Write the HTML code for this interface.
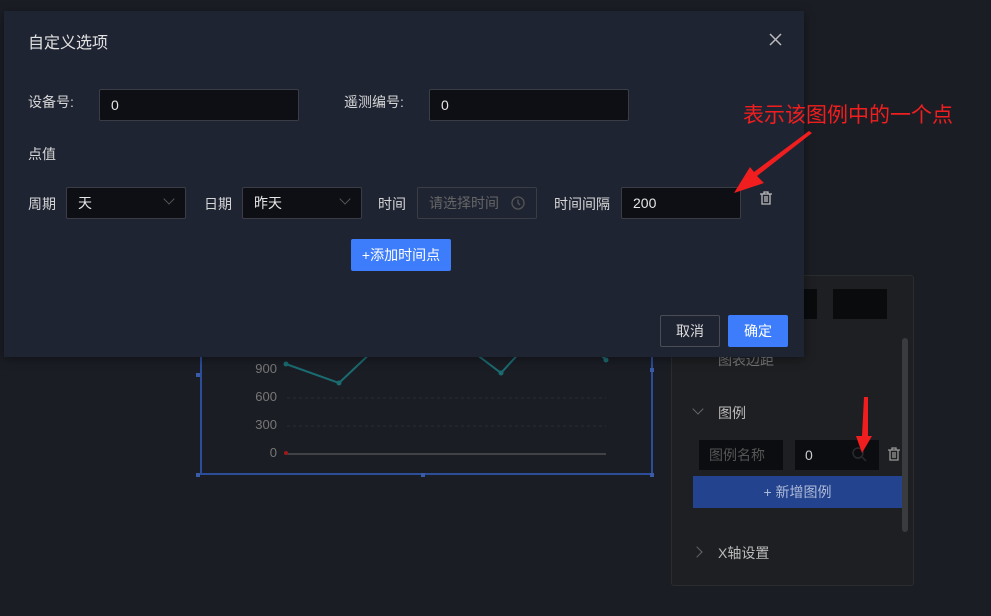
<!DOCTYPE html>
<html><head><meta charset="utf-8"><style>
*{box-sizing:border-box;margin:0;padding:0}
body{width:991px;height:616px;overflow:hidden;background:#1b1d25;font-family:"Liberation Sans","Noto Sans CJK SC",sans-serif;font-size:14px;color:#d8d8d8;position:relative}
.a{position:absolute}
.inp{position:absolute;background:#0e0f14;border:1px solid #3a3d45;border-radius:2px;height:32px;line-height:30px;padding-left:11px;color:#e6e6e6;font-size:14px}
.lbl{position:absolute;font-size:14px;color:#d6d6d6}
.chev{position:absolute;width:8px;height:8px;border-right:1px solid #666;border-bottom:1px solid #666;transform:rotate(45deg)}
</style></head><body>
<div class="a" style="left:671px;top:275px;width:243px;height:311px;background:#1e1f22;border:1px solid #2b2c30;border-radius:3px"></div>
<div class="a" style="left:803px;top:289px;width:14px;height:30px;background:#0a0b0d"></div>
<div class="a" style="left:833px;top:289px;width:54px;height:30px;background:#0a0b0d"></div>
<div class="a" style="left:902px;top:338px;width:6px;height:194px;background:#3a3b3f;border-radius:3px"></div>
<div class="a" style="left:718px;top:350px;font-size:14px;color:#777">图表边距</div>
<div class="chev" style="left:694px;top:405px"></div>
<div class="a" style="left:718px;top:403px;font-size:14px;color:#bbb">图例</div>
<div class="a" style="left:699px;top:440px;width:84px;height:30px;background:#0c0d10;color:#555;line-height:30px;padding-left:10px">图例名称</div>
<div class="a" style="left:795px;top:440px;width:84px;height:30px;background:#0c0d10;color:#ccc;line-height:30px;padding-left:10px">0</div>
<svg class="a" style="left:850px;top:445px" width="18" height="20"><circle cx="8" cy="8" r="5" stroke="#2a2b2e" fill="none" stroke-width="1.5"/><line x1="12" y1="12" x2="16" y2="16" stroke="#2a2b2e" stroke-width="1.5"/></svg>
<svg class="a" style="left:886px;top:446px" width="16" height="16"><path d="M2 4h12M6 4V2h4v2M4 4v10h8V4M7 6v6M9 6v6" stroke="#999" fill="none" stroke-width="1.3"/></svg>
<div class="a" style="left:693px;top:476px;width:209px;height:32px;background:#24438e;color:#aebbd8;text-align:center;line-height:32px">+ 新增图例</div>
<div class="chev" style="left:693px;top:548px;transform:rotate(-45deg)"></div>
<div class="a" style="left:718px;top:543px;color:#bbb">X轴设置</div>
<div class="a" style="left:200px;top:300px;width:453px;height:175px;border:2px solid #2b4d9a;border-top:none"></div>
<svg class="a" style="left:190px;top:340px" width="480" height="145">
<g fill="#3a5ba8"><rect x="6" y="33" width="4" height="4"/><rect x="6" y="133" width="4" height="4"/><rect x="231" y="133" width="4" height="4"/><rect x="460" y="133" width="4" height="4"/><rect x="460" y="28" width="4" height="4"/></g>
<g stroke="#2a2d35" stroke-dasharray="3 3"><line x1="97" y1="58" x2="416" y2="58"/><line x1="97" y1="86" x2="416" y2="86"/></g>
<line x1="97" y1="114" x2="416" y2="114" stroke="#666"/>
<polyline points="96,24 149,43 186,8" stroke="#1a6b70" stroke-width="2" fill="none"/>
<polyline points="278,8 311,33 332,10" stroke="#1a6b70" stroke-width="2" fill="none"/>
<polyline points="410,14 416,20" stroke="#1a6b70" stroke-width="2" fill="none"/>
<g fill="#1a6b70"><circle cx="96" cy="24" r="2.5"/><circle cx="149" cy="43" r="2.5"/><circle cx="311" cy="33" r="2.5"/><circle cx="416" cy="20" r="2.5"/></g>
<circle cx="96" cy="113" r="2" fill="#a01818"/>
<g fill="#777" font-size="13" text-anchor="end" font-family="Liberation Sans"><text x="87" y="33">900</text><text x="87" y="61">600</text><text x="87" y="89">300</text><text x="87" y="117">0</text></g>
</svg>
<div class="a" style="left:4px;top:11px;width:800px;height:346px;background:#1f2433;box-shadow:0 2px 10px rgba(0,0,0,.4)"></div>
<div class="a" style="left:28px;top:29px;font-size:16px;color:#e2e2e2">自定义选项</div>
<svg class="a" style="left:768px;top:32px" width="15" height="15"><path d="M2 2L13 13M13 2L2 13" stroke="#bbb" stroke-width="1.5"/></svg>
<div class="lbl" style="left:28px;top:92px">设备号:</div>
<div class="inp" style="left:99px;top:89px;width:200px">0</div>
<div class="lbl" style="left:344px;top:92px">遥测编号:</div>
<div class="inp" style="left:429px;top:89px;width:200px">0</div>
<div class="lbl" style="left:28px;top:144px">点值</div>
<div class="lbl" style="left:28px;top:194px">周期</div>
<div class="inp" style="left:66px;top:187px;width:120px">天</div>
<div class="chev" style="left:165px;top:195px;border-color:#555"></div>
<div class="lbl" style="left:204px;top:194px">日期</div>
<div class="inp" style="left:242px;top:187px;width:120px">昨天</div>
<div class="chev" style="left:341px;top:195px;border-color:#555"></div>
<div class="lbl" style="left:378px;top:194px">时间</div>
<div class="inp" style="left:417px;top:187px;width:120px;background:#1f2433;color:#666">请选择时间</div>
<svg class="a" style="left:510px;top:195px" width="16" height="16"><circle cx="8" cy="8" r="6" stroke="#555" fill="none" stroke-width="1.3"/><path d="M8 4.5V8l2 2" stroke="#555" fill="none" stroke-width="1.3"/></svg>
<div class="lbl" style="left:554px;top:194px">时间间隔</div>
<div class="inp" style="left:621px;top:187px;width:120px">200</div>
<svg class="a" style="left:758px;top:190px" width="16" height="16"><path d="M2 4h12M6 4V2h4v2M4 4v10h8V4M7 6v6M9 6v6" stroke="#bbb" fill="none" stroke-width="1.3"/></svg>
<div class="a" style="left:351px;top:239px;width:100px;height:32px;background:#3d7dfb;color:#fff;line-height:32px;text-align:center;border-radius:2px">+添加时间点</div>
<div class="a" style="left:660px;top:315px;width:60px;height:32px;border:1px solid #4a4d55;border-radius:2px;line-height:30px;text-align:center;color:#ddd">取消</div>
<div class="a" style="left:728px;top:315px;width:60px;height:32px;background:#3d7dfb;border-radius:2px;line-height:32px;text-align:center;color:#fff">确定</div>
<div class="a" style="left:743px;top:99px;font-size:21px;color:#f01e1e">表示该图例中的一个点</div>
<svg class="a" style="left:0;top:0" width="991" height="616">
<polygon points="812,133 757,176 764,183 734,193 750,167 754,172 809,131" fill="#f01e1e"/>
<polygon points="864,397 868,397 868,436 872,436 862,453 856,436 862,436" fill="#f01e1e"/>
</svg>
</body></html>
